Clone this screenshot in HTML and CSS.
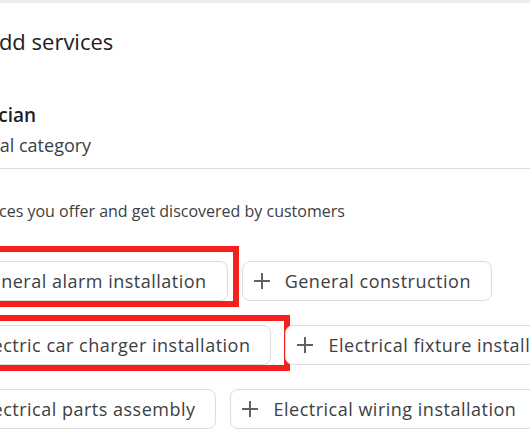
FILE: index.html
```html
<!DOCTYPE html>
<html lang="en">
<head>
<meta charset="utf-8">
<title>Add services</title>
<link rel="stylesheet" href="styles.css">
</head>
<body>
<div class="dialog">
  <header class="head">
    <svg class="back" viewBox="0 0 24 24" width="24" height="24"><path d="M20 11H7.83l5.59-5.59L12 4l-8 8 8 8 1.41-1.41L7.83 13H20v-2z" fill="#5f6368"/></svg>
    <h1 class="title">Add services</h1>
  </header>
  <section class="category">
    <div class="cat-name">Electrician</div>
    <div class="cat-type">Additional category</div>
  </section>
  <p class="desc">Add services you offer and get discovered by customers</p>
  <div class="chips">
    <button class="chip"><svg class="plus" viewBox="0 0 16 16"><path d="M8 0v16M0 8h16"/></svg><span>General alarm installation</span><i class="mark mark-1"></i></button>
    <button class="chip"><svg class="plus" viewBox="0 0 16 16"><path d="M8 0v16M0 8h16"/></svg><span>General construction</span></button>
    <button class="chip"><svg class="plus" viewBox="0 0 16 16"><path d="M8 0v16M0 8h16"/></svg><span>Electric car charger installation</span><i class="mark mark-2"></i></button>
    <button class="chip"><svg class="plus" viewBox="0 0 16 16"><path d="M8 0v16M0 8h16"/></svg><span>Electrical fixture installation</span></button>
    <button class="chip"><svg class="plus" viewBox="0 0 16 16"><path d="M8 0v16M0 8h16"/></svg><span>Electrical parts assembly</span></button>
    <button class="chip"><svg class="plus" viewBox="0 0 16 16"><path d="M8 0v16M0 8h16"/></svg><span>Electrical wiring installation</span></button>
    <button class="chip"><svg class="plus" viewBox="0 0 16 16"><path d="M8 0v16M0 8h16"/></svg><span>Electrical repair</span></button>
  </div>
</div>
</body>
</html>
```
FILE: styles.css
```css
html, body {
  margin: 0;
  padding: 0;
}
body {
  background: #ececec;
  overflow: hidden;
  width: 530px;
  height: 442px;
  font-family: "Open Sans", Roboto, "Liberation Sans", Arial, sans-serif;
}
.dialog {
  margin-top: 3px;
  margin-left: -80px;
  width: 760px;
  height: 500px;
  background: #fff;
  padding: 0 24px;
  box-sizing: border-box;
}
.head {
  display: flex;
  align-items: center;
  gap: 17px;
  padding-top: 24px;
}
.back {
  width: 24px;
  height: 24px;
  flex: none;
}
.title {
  margin: 0;
  font-size: 22px;
  line-height: 28px;
  font-weight: 400;
  color: #202124;
}
.category {
  margin: 0 -24px;
  padding: 46px 24px 11px;
  border-bottom: 1px solid #dadce0;
}
.cat-name {
  margin-left: -3px;
  font-size: 19px;
  line-height: 28px;
  font-weight: 600;
  color: #202124;
}
.cat-type {
  margin-top: 4px;
  margin-left: -15px;
  font-size: 18px;
  line-height: 24px;
  color: #3c4043;
}
.desc {
  margin: 32px 0 0 -14px;
  font-size: 16px;
  line-height: 20px;
  color: #3c4043;
}
.chips {
  margin: 40px 0 0 -10px;
  display: flex;
  flex-wrap: wrap;
  column-gap: 14px;
  row-gap: 24px;
  width: 700px;
}
.chip {
  position: relative;
  display: flex;
  align-items: center;
  gap: 15px;
  height: 40px;
  padding: 0 20px 0 11px;
  border: 1px solid #dadce0;
  border-radius: 8px;
  background: #fff;
  font-family: inherit;
  font-size: 18px;
  letter-spacing: 0.5px;
  color: #3c4043;
  white-space: nowrap;
  box-sizing: border-box;
}
.plus {
  width: 16px;
  height: 16px;
  flex: none;
  stroke: #5f6368;
  stroke-width: 2;
}
.mark {
  position: absolute;
  left: -20px;
  border: 6px solid #f5201c;
}
.mark-1 {
  top: -16px;
  bottom: -7px;
  right: -12px;
}
.mark-2 {
  top: -11px;
  bottom: -7px;
  right: -20px;
}
```
